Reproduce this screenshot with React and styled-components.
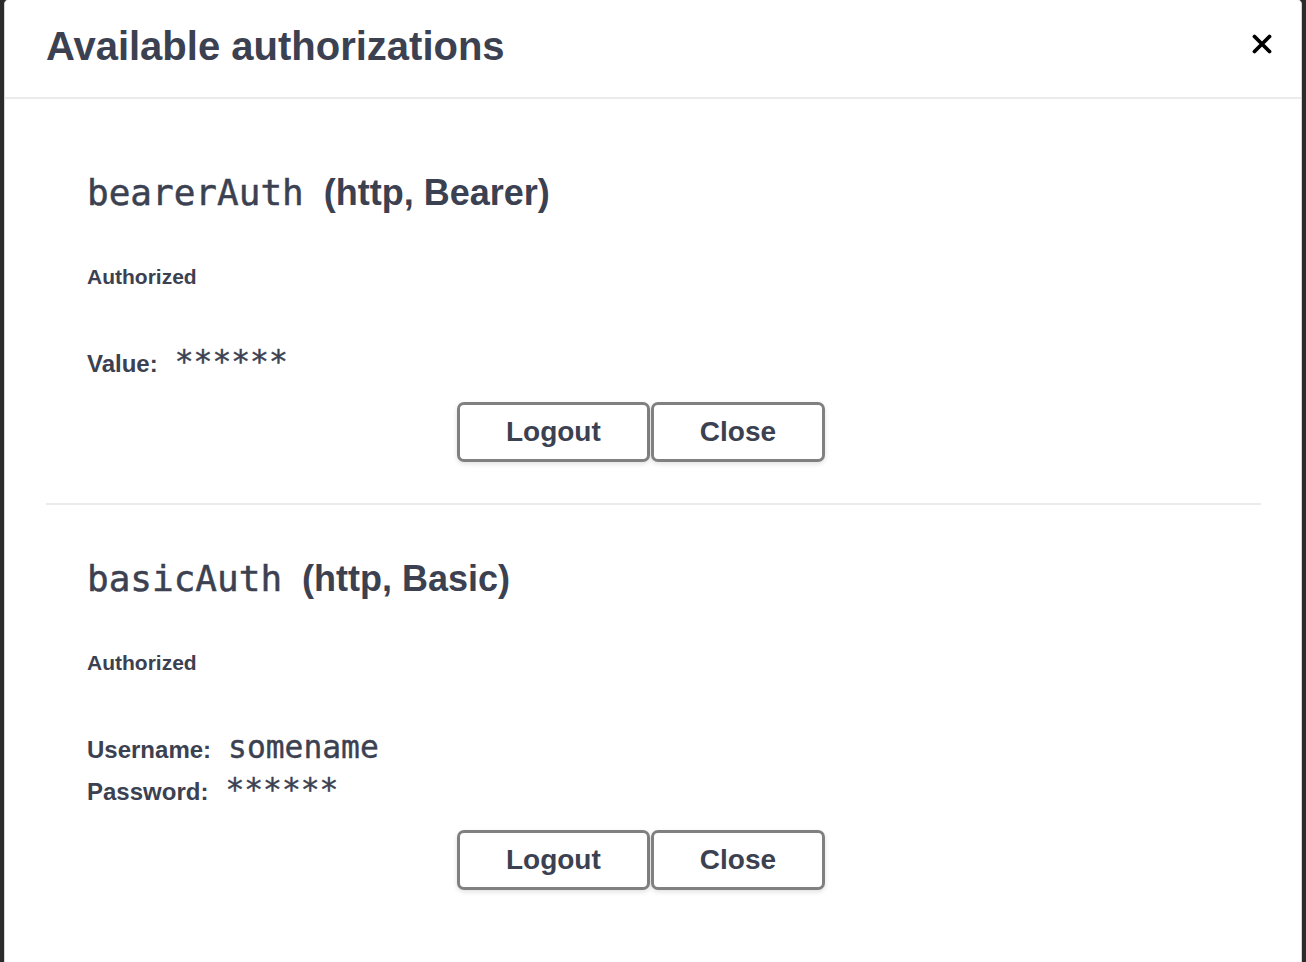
import React from "react";
import styled, { createGlobalStyle } from "styled-components";

const Global = createGlobalStyle`
  html, body { margin: 0; padding: 0; background: #2b2b2b; }
  body { font-family: "Liberation Sans", Arial, sans-serif; color: #3b4151; overflow: hidden; }
  * { box-sizing: border-box; }
`;

const Backdrop = styled.div`
  width: 1306px;
  height: 962px;
  background: #2b2b2b;
  display: flex;
  align-items: flex-start;
  overflow: hidden;
`;

const Modal = styled.div`
  margin: -1px 0 0 4px;
  width: 1298px;
  min-height: 980px;
  background: #fff;
  border: 1px solid #d6d6d6;
  border-radius: 5px;
  display: flex;
  flex-direction: column;
`;

const Header = styled.div`
  height: 99px;
  padding: 26px 29px 0 41px;
  border-bottom: 2px solid #ebebeb;
  display: flex;
  justify-content: space-between;
  align-items: flex-start;
`;

const Title = styled.h3`
  margin: 0;
  font-size: 40px;
  line-height: 40px;
  font-weight: 700;
  color: #3b4151;
`;

const CloseButton = styled.button`
  margin-top: 8px;
  padding: 0;
  border: none;
  background: none;
  width: 20px;
  height: 20px;
  display: flex;
`;

const Content = styled.div`
  padding: 20px 40px 0 41px;
`;

const Section = styled.section`
  padding: 52px 0 41px 41px;
  border-bottom: ${(p) => (p.$last ? "none" : "2px solid #ebebeb")};
`;

const Heading = styled.h4`
  margin: 0;
  font-size: 36px;
  line-height: 44px;
  font-weight: 700;
  color: #3b4151;
  white-space: nowrap;
`;

const SchemeName = styled.code`
  font-family: "DejaVu Sans Mono", "Liberation Mono", monospace;
  font-weight: 400;
  font-size: 36px;
  margin-right: 20px;
  -webkit-text-stroke: 0.5px #3b4151;
`;

const Status = styled.h6`
  margin: 50px 0 0;
  font-size: 21px;
  line-height: 24px;
  font-weight: 700;
  color: #3b4151;
`;

const Fields = styled.div`
  margin-top: 54px;
  display: flex;
  flex-direction: column;
  gap: 6px;
`;

const Field = styled.div`
  height: 36px;
  line-height: 36px;
  white-space: nowrap;
`;

const Label = styled.label`
  font-size: 24px;
  font-weight: 700;
  color: #3b4151;
  margin-right: 17px;
`;

const Code = styled.code`
  font-family: "DejaVu Sans Mono", "Liberation Mono", monospace;
  font-size: 31.3px;
  color: #3b4151;
  -webkit-text-stroke: 0.4px #3b4151;
`;

const ButtonRow = styled.div`
  margin-top: 23px;
  padding-right: 66px;
  display: flex;
  justify-content: center;
  gap: 1px;
`;

const Button = styled.button`
  height: 60px;
  padding: 0 46px;
  border: 3px solid #808080;
  border-radius: 7px;
  background: #fff;
  box-shadow: 0 2px 5px rgba(0, 0, 0, 0.12);
  font-family: "Liberation Sans", Arial, sans-serif;
  font-size: 28px;
  line-height: 54px;
  font-weight: 700;
  color: #3b4151;
`;

const CloseIcon = () => (
  <svg width="20" height="20" viewBox="0 0 20 20">
    <path d="M2.5 2.5 L17.5 17.5 M17.5 2.5 L2.5 17.5" stroke="#000" strokeWidth="3.8" strokeLinecap="round" fill="none" />
  </svg>
);

const schemes = [
  {
    name: "bearerAuth",
    type: "(http, Bearer)",
    fields: [{ label: "Value:", value: "******" }],
  },
  {
    name: "basicAuth",
    type: "(http, Basic)",
    fields: [
      { label: "Username:", value: "somename" },
      { label: "Password:", value: "******" },
    ],
  },
];

export default function App() {
  return (
    <>
      <Global />
      <Backdrop>
        <Modal>
          <Header>
            <Title>Available authorizations</Title>
            <CloseButton aria-label="Close">
              <CloseIcon />
            </CloseButton>
          </Header>
          <Content>
            {schemes.map((s, i) => (
              <Section key={s.name} $last={i === schemes.length - 1}>
                <Heading>
                  <SchemeName>{s.name}</SchemeName>
                  {s.type}
                </Heading>
                <Status>Authorized</Status>
                <Fields>
                  {s.fields.map((f) => (
                    <Field key={f.label}>
                      <Label>{f.label}</Label>
                      <Code>{f.value}</Code>
                    </Field>
                  ))}
                </Fields>
                <ButtonRow>
                  <Button>Logout</Button>
                  <Button>Close</Button>
                </ButtonRow>
              </Section>
            ))}
          </Content>
        </Modal>
      </Backdrop>
    </>
  );
}
